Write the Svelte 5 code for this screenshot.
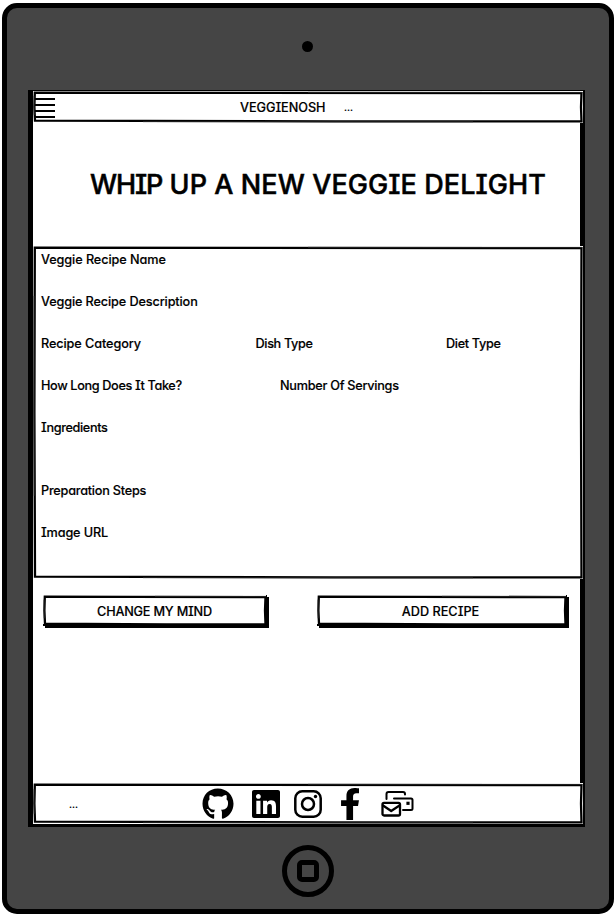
<script>
  const rows = [
    [{ text: 'Veggie Recipe Name', width: 130, track: -0.09 }],
    [{ text: 'Veggie Recipe Description', width: 165, track: -0.13 }],
    [
      { text: 'Recipe Category', width: 214.5, track: -0.1 },
      { text: 'Dish Type', width: 190.5, track: -0.36 },
      { text: 'Diet Type', width: 60, track: -0.33 }
    ],
    [
      { text: 'How Long Does It Take?', width: 239, track: -0.36 },
      { text: 'Number Of Servings', width: 124, track: -0.27 }
    ],
    [{ text: 'Ingredients', width: 75, track: -0.36, tall: true }],
    [{ text: 'Preparation Steps', width: 115, track: -0.24 }],
    [{ text: 'Image URL', width: 75, track: -0.15 }]
  ];
</script>

{#snippet outline(w, h)}
  <svg class="outline" width={w} height={h} viewBox="0 0 {w} {h}" aria-hidden="true">
    <path d="M1.8 1.7 L{w * 0.4} 1.9 L{w - 1.5} 2.1 L{w - 2} {h / 2} L{w - 1.5} {h - 1.6} L{w * 0.55} {h - 1.6} L2 {h - 2.3} L1.4 {h * 0.5} Z" />
    <path class="faint" d="M1 {h * 0.15} L1.2 {h * 0.75} M{w * 0.5} 1.3 L{w - 1} 1.4 M{w * 0.2} {h - 1.3} L{w * 0.8} {h - 1.2}" />
  </svg>
{/snippet}

<main class="tablet">
  <div class="camera"></div>
  <section class="screen">
    <header class="band bar">
      {@render outline(550, 32)}
      <div class="burger"><i></i><i></i><i></i><i></i></div>
      <span class="brand">VEGGIENOSH</span>
      <span class="dots">...</span>
    </header>

    <h1><span>WHIP</span> UP A NEW VEGGIE DELIGHT</h1>

    <div class="band form">
      {@render outline(550, 333)}
      {#each rows as row}
        <div class="row" class:tall={row[0].tall}>
          {#each row as field}
            <span style="width: {field.width}px; letter-spacing: {field.track}px">{field.text}</span>
          {/each}
        </div>
      {/each}
    </div>

    <div class="actions">
      <button class="cancel">{@render outline(224, 31)}<span>CHANGE MY MIND</span></button>
      <button class="add">{@render outline(250, 31)}<span>ADD RECIPE</span></button>
    </div>

    <footer class="band foot">
      {@render outline(550, 41)}
      <span class="dots small">...</span>
      <svg class="github" width="32" height="32" viewBox="0 0 496 512"><path d="M244.8 8C106.1 8 0 113.3 0 252c0 110.9 69.8 205.8 169.5 239.2 12.8 2.3 17.3-5.6 17.3-12.1 0-6.2-.3-40.4-.3-61.4 0 0-70 15-84.7-29.8 0 0-11.4-29.1-27.8-36.6 0 0-22.9-15.7 1.6-15.4 0 0 24.9 2 38.6 25.8 21.9 38.6 58.6 27.5 72.9 20.9 2.3-16 8.8-27.1 16-33.7-55.9-6.2-112.3-14.3-112.3-110.5 0-27.5 7.6-41.3 23.6-58.9-2.6-6.5-11.1-33.3 2.6-67.9 20.9-6.5 69 27 69 27 20-5.6 41.5-8.5 62.8-8.5s42.8 2.9 62.8 8.5c0 0 48.1-33.6 69-27 13.7 34.7 5.2 61.4 2.6 67.9 16 17.7 25.8 31.5 25.8 58.9 0 96.5-58.9 104.2-114.8 110.5 9.2 7.9 17 22.9 17 46.4 0 33.7-.3 75.4-.3 83.6 0 6.5 4.6 14.4 17.3 12.1C428.2 457.8 496 362.9 496 252 496 113.3 383.5 8 244.8 8z" /></svg>
      <svg class="linkedin" width="28" height="28" viewBox="0 0 448 448"><path d="M416 0H31.9C14.3 0 0 14.5 0 32.3v383.4C0 433.5 14.3 448 31.9 448H416c17.6 0 32-14.5 32-32.3V32.3C448 14.5 433.6 0 416 0zM135.4 384H69V170.2h66.5V384zm-33.2-243c-21.3 0-38.5-17.3-38.5-38.5S80.9 64 102.2 64c21.2 0 38.5 17.3 38.5 38.5 0 21.3-17.2 38.5-38.5 38.5zm282.1 243h-66.4V280c0-24.8-.5-56.7-34.5-56.7-34.6 0-39.9 27-39.9 54.9V384h-66.4V170.2h63.7v29.2h.9c8.9-16.8 30.6-34.5 62.9-34.5 67.2 0 79.7 44.3 79.7 101.9V384z" /></svg>
      <svg class="insta" width="28" height="28" viewBox="0 0 28 28"><rect x="1.3" y="1.3" width="25.4" height="25.4" rx="7" fill="none" stroke="#000" stroke-width="2.5" /><circle cx="14" cy="14" r="6" fill="none" stroke="#000" stroke-width="2.5" /><circle cx="21.5" cy="6.5" r="1.7" /></svg>
      <svg class="facebook" width="18" height="32" viewBox="22 0 272 512" preserveAspectRatio="none"><path d="m279.14 288 14.22-92.66h-88.91v-60.13c0-25.35 12.42-50.06 52.24-50.06h40.42V6.26S260.43 0 225.36 0c-73.22 0-121.08 44.38-121.08 124.72v70.62H22.89V288h81.39v224h100.17V288z" /></svg>
      <svg class="mail" width="33" height="27" viewBox="0 0 33 27" fill="none" stroke="#000" stroke-width="2" stroke-linejoin="round" stroke-linecap="round"><path d="M5.5 9V4Q5.5 2 7.5 2H22Q24 2 24 4V4.5M13 8.5H30Q31.5 8.5 31.5 10V18.5Q31.5 20 30 20H22" /><path d="M27 11.7v3.2" stroke-width="3.2" stroke-linecap="butt" /><rect x="1.5" y="12.8" width="17.5" height="12.7" rx="1.5" stroke-width="2.3" /><path d="M2 15.5l8.2 5.5 8.3-5.5" stroke-width="2.3" /></svg>
    </footer>
  </section>
  <div class="home"><div></div></div>
</main>

<style>
  :global(body) { margin: 0; background: #fff; }
  .tablet {
    box-sizing: border-box;
    width: 612px;
    height: 911px;
    margin: 3px 0 2px 2px;
    border: 5px solid #000;
    border-radius: 15px;
    background: #454545;
    display: flex;
    flex-direction: column;
    color: #000;
    font: 500 12.7px/21px Inter, "Noto Sans", sans-serif;
    font-feature-settings: "cv11", "cv08", "ss03";
    -webkit-text-stroke: 0.15px #000;
  }
  .camera {
    width: 11px;
    height: 11px;
    margin: 32.5px 0 38.5px 295.3px;
    border-radius: 50%;
    background: #000;
    flex: none;
  }
  .screen {
    box-sizing: border-box;
    width: 557px;
    height: 737px;
    margin-left: 21px;
    border: solid #000;
    border-width: 1px 5px 3px;
    background: #fff;
    display: flex;
    flex-direction: column;
    flex: none;
  }
  .band {
    position: relative;
    box-sizing: border-box;
    width: 550px;
    background: #fff;
    flex: none;
  }
  .outline { position: absolute; inset: 0; pointer-events: none; }
  .outline path { fill: none; stroke: #000; stroke-width: 2.3; }
  .outline .faint { stroke-width: 0.7; stroke: #333; }
  .bar { height: 32px; display: flex; align-items: center; }
  .burger { display: flex; flex-direction: column; gap: 4px; margin-left: 2px; padding-top: 1px; width: 20.4px; }
  .burger i { height: 2px; background: #000; }
  .brand { width: 104px; margin-left: 184.6px; letter-spacing: -0.05px; }
  .dots { font-size: 9px; font-weight: 700; }
  .bar .dots { padding-top: 1px; }
  h1 {
    margin: 0;
    padding-left: 57px;
    height: 123px;
    font-size: 27px;
    font-weight: 500;
    line-height: 123px;
    letter-spacing: 0.08px;
    white-space: nowrap;
    -webkit-text-stroke: 0.5px #000;
    stroke-linejoin: round;
  }
  h1 span { letter-spacing: -1.1px; }
  .form { height: 333px; padding: 3px 0 0 8px; white-space: nowrap; }
  .row { height: 42px; display: flex; }
  .row.tall { height: 63px; }
  .row span { flex: none; }
  .actions {
    box-sizing: border-box;
    display: flex;
    gap: 50px;
    height: 204px;
    padding: 16px 0 0 10px;
  }
  button {
    position: relative;
    height: 31px;
    padding: 2px 0 0;
    border: 0;
    background: #fff;
    box-shadow: inset -1px -2px 0 #000;
    color: inherit;
    font: inherit;
    font-feature-settings: inherit;
  }
  button::after {
    content: "";
    position: absolute;
    inset: 2px -2px -2px 2px;
    border: solid #000;
    border-width: 0 3px 4px 0;
  }
  .cancel { width: 224px; padding-right: 1px; letter-spacing: -0.2px; }
  .add { width: 250px; padding-right: 3px; }
  .foot { height: 41px; display: flex; align-items: center; }
  .foot > svg:not(.outline) { flex: none; }
  .small { width: 133px; margin-left: 36px; padding-top: 2px; }
  .linkedin { margin-left: 18px; }
  .insta { margin-left: 14px; }
  .facebook { margin-left: 19px; }
  .mail { margin-left: 22px; }
  .home {
    box-sizing: border-box;
    width: 52px;
    height: 52px;
    margin: 18px 0 0 275px;
    border: 5px solid #000;
    border-radius: 50%;
    display: grid;
    place-items: center;
    flex: none;
  }
  .home div { box-sizing: border-box; width: 22px; height: 22px; border: 5px solid #000; border-radius: 5px; }
</style>
